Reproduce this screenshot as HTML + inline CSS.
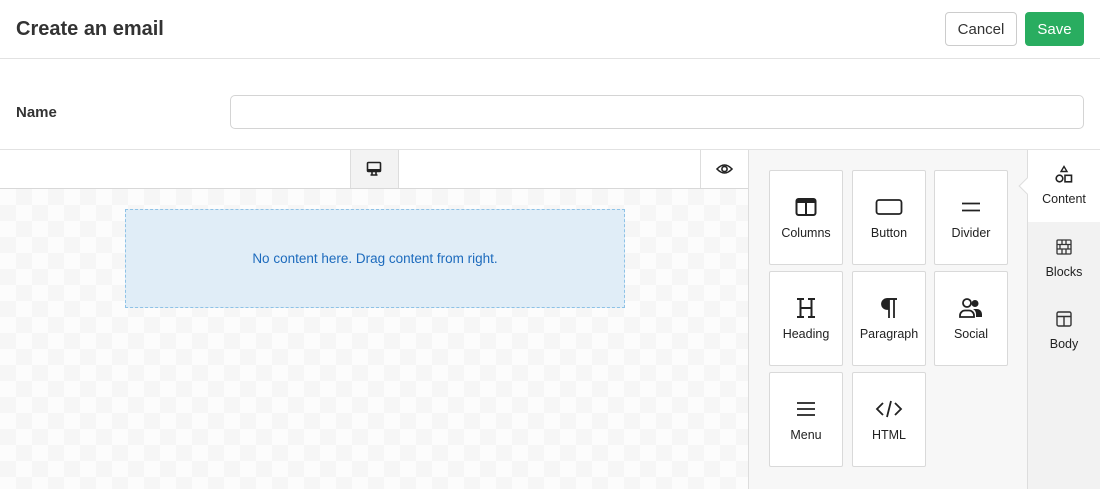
<!DOCTYPE html>
<html><head><style>
*{box-sizing:border-box;margin:0;padding:0}
body{width:1100px;height:489px;overflow:hidden;font-family:"Liberation Sans",sans-serif;background:#fff;color:#222;position:relative}
.abs{position:absolute}
.title{left:16px;top:18px;font-size:20px;font-weight:bold;color:#333}
.btn{top:12px;height:34px;border-radius:4px;font-size:15px;display:flex;align-items:center;justify-content:center}
.hr{left:0;width:1100px;height:1px;background:#e2e2e2}
.tile{width:74px;height:95px;background:#fff;border:1px solid #d9d9d9;border-radius:2px;display:flex;flex-direction:column;align-items:center;font-size:12.5px;color:#222}
.tile svg{margin-top:25px;margin-bottom:8px;height:22px}
.tab{left:1028px;width:72px;display:flex;flex-direction:column;align-items:center;font-size:12.5px;color:#222}
</style></head><body>
<div class="abs title">Create an email</div>
<div class="abs btn" style="left:945px;width:72px;border:1px solid #ccc;color:#333">Cancel</div>
<div class="abs btn" style="left:1025px;width:59px;background:#29ad60;color:#fff">Save</div>
<div class="abs hr" style="top:58px"></div>
<div class="abs" style="left:16px;top:104px;font-size:15px;font-weight:bold;color:#333">Name</div>
<div class="abs" style="left:230px;top:95px;width:854px;height:34px;border:1px solid #d4d4d4;border-radius:5px"></div>
<div class="abs hr" style="top:149px"></div>
<div class="abs" style="left:0;top:188px;width:748px;height:1px;background:#d8d8d8"></div>
<div class="abs" style="left:350px;top:150px;width:49px;height:38px;background:#f3f3f3;border-left:1px solid #ddd;border-right:1px solid #ddd"></div>
<svg class="abs" style="left:366px;top:161px" width="16" height="16" viewBox="0 0 16 16"><rect x="1.5" y="1.5" width="13" height="9" rx="1" fill="none" stroke="#222" stroke-width="1.6"/><rect x="1.5" y="8" width="13" height="2.5" fill="#222"/><path d="M6 11v3M10 11v3M4.5 14h7" stroke="#222" stroke-width="1.6"/></svg>
<div class="abs" style="left:700px;top:150px;width:1px;height:38px;background:#ddd"></div>
<svg class="abs" style="left:716px;top:161px" width="17" height="16" viewBox="0 0 17 16"><path d="M1 8Q8.5 0 16 8Q8.5 16 1 8Z" fill="none" stroke="#222" stroke-width="1.6"/><circle cx="8.5" cy="8" r="2.6" fill="none" stroke="#222" stroke-width="1.6"/></svg>
<div class="abs" style="left:0;top:189px;width:748px;height:300px;background-color:#fcfcfc;background-image:linear-gradient(45deg,#f6f6f6 25%,transparent 25%,transparent 75%,#f6f6f6 75%),linear-gradient(45deg,#f6f6f6 25%,transparent 25%,transparent 75%,#f6f6f6 75%);background-size:32px 32px;background-position:0 0,16px 16px"></div>
<div class="abs" style="left:125px;top:209px;width:500px;height:99px;background:#e0edf7;border:1px dashed #8ec2e6;display:flex;align-items:center;justify-content:center;font-size:13.5px;color:#1d6bbd">No content here. Drag content from right.</div>
<div class="abs" style="left:748px;top:150px;width:280px;height:339px;background:#f7f7f7;border-left:1px solid #ddd;border-right:1px solid #ddd"></div>
<div class="abs" style="left:1028px;top:150px;width:72px;height:339px;background:#f2f2f2"></div>
<div class="abs" style="left:1028px;top:150px;width:72px;height:72px;background:#fff"></div>
<div class="abs" style="left:1021px;top:180px;width:12px;height:12px;background:#fff;transform:rotate(45deg);border-left:1px solid #ddd;border-bottom:1px solid #ddd"></div>
<div class="abs tab" style="top:165px"><svg width="20" height="20" viewBox="0 0 20 20"><path d="M10 1.5L13 6.5H7Z" fill="none" stroke="#222" stroke-width="1.4"/><circle cx="5.5" cy="13.5" r="3.3" fill="none" stroke="#222" stroke-width="1.6"/><rect x="11" y="10.3" width="6.5" height="6.5" fill="none" stroke="#222" stroke-width="1.6"/></svg><div style="margin-top:7px">Content</div></div>
<div class="abs tab" style="top:238px"><svg width="18" height="18" viewBox="0 0 18 18" fill="none" stroke="#333" stroke-width="1.3"><rect x="2" y="2" width="14" height="14" rx="1"/><path d="M2 6.5h14M2 11h14M7 2v4.5M11 2v4.5M5 6.5v4.5M13 6.5v4.5M7 11v5M11 11v5"/></svg><div style="margin-top:9px">Blocks</div></div>
<div class="abs tab" style="top:310px"><svg width="18" height="18" viewBox="0 0 18 18" fill="none" stroke="#333" stroke-width="1.4"><rect x="2" y="2" width="14" height="14" rx="1.5"/><path d="M2 6.5h14M9 6.5v9.5"/></svg><div style="margin-top:9px">Body</div></div>

<div class="abs tile" style="left:769px;top:170px"><svg width="22" height="20" viewBox="0 0 22 20"><rect x="1.5" y="2" width="19" height="16" rx="2" fill="none" stroke="#222" stroke-width="2"/><rect x="1.5" y="2" width="19" height="4" fill="#222"/><path d="M11 5v13" stroke="#222" stroke-width="2"/></svg>Columns</div>
<div class="abs tile" style="left:852px;top:170px"><svg width="28" height="20" viewBox="0 0 28 20"><rect x="1.5" y="3" width="25" height="14" rx="2.5" fill="none" stroke="#222" stroke-width="1.8"/></svg>Button</div>
<div class="abs tile" style="left:934px;top:170px"><svg width="20" height="20" viewBox="0 0 20 20"><path d="M1 6.5h18M1 13.5h18" stroke="#222" stroke-width="1.8"/></svg>Divider</div>
<div class="abs tile" style="left:769px;top:271px"><svg width="24" height="22" viewBox="0 0 24 22"><path d="M3 2h7M14 2h7M6.5 2v18M17.5 2v18M6.5 11h11M3 20h7M14 20h7" stroke="#222" stroke-width="2" fill="none"/></svg>Heading</div>
<div class="abs tile" style="left:852px;top:271px"><svg width="22" height="22" viewBox="0 0 22 22"><path d="M19 2H9a5 5 0 0 0 0 10h2" fill="none" stroke="#222" stroke-width="1.8"/><path d="M9 2a5 5 0 0 0 0 10h2V2Z" fill="#222"/><path d="M11 2v19M16 2v19M8.5 2H19" stroke="#222" stroke-width="1.8"/></svg>Paragraph</div>
<div class="abs tile" style="left:934px;top:271px"><svg width="26" height="22" viewBox="0 0 26 22"><circle cx="9" cy="6" r="4" fill="none" stroke="#222" stroke-width="1.8"/><path d="M2 20v-1.5a5 5 0 0 1 5-5h4a5 5 0 0 1 5 5V20Z" fill="none" stroke="#222" stroke-width="1.8"/><circle cx="17" cy="6.5" r="3.5" fill="#222"/><path d="M15 12h4a5 5 0 0 1 5 5v3h-6v-3a6 6 0 0 0-3-5Z" fill="#222"/></svg>Social</div>
<div class="abs tile" style="left:769px;top:372px"><svg width="20" height="20" viewBox="0 0 20 20"><path d="M1 4h18M1 10h18M1 16h18" stroke="#222" stroke-width="1.8"/></svg>Menu</div>
<div class="abs tile" style="left:852px;top:372px"><svg width="28" height="20" viewBox="0 0 28 20" fill="none" stroke="#222" stroke-width="1.8"><path d="M8 4L2 10l6 6M20 4l6 6-6 6M16 2l-4 16"/></svg>HTML</div>
</body></html>
